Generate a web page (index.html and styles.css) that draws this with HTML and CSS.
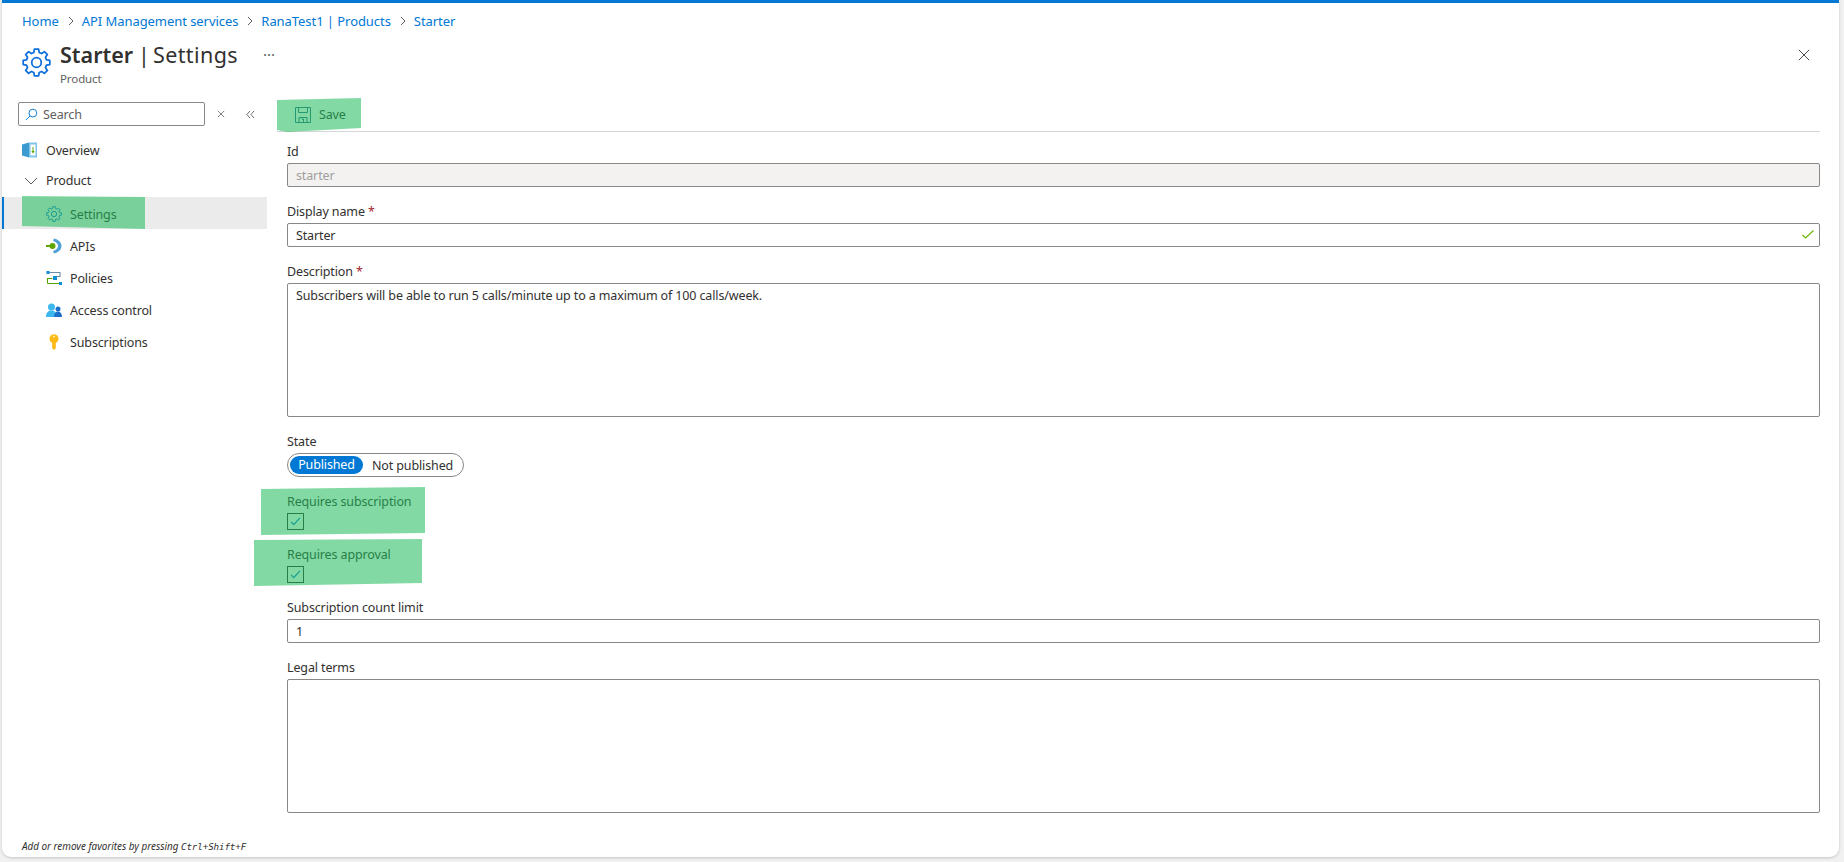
FILE: index.html
```html
<!DOCTYPE html>
<html lang="en">
<head>
<meta charset="utf-8">
<title>Starter | Settings</title>
<link rel="stylesheet" href="styles.css">
</head>
<body>
<svg class="defs" width="0" height="0" aria-hidden="true">
  <symbol id="gear" viewBox="0 0 28 28">
    <path fill="none" stroke="currentColor" stroke-width="1.7" stroke-linejoin="round" d="M23.66 11.41L26.84 11.97V16.03L23.66 16.59L22.66 19L24.52 21.64L21.64 24.52L19 22.66L16.59 23.66L16.03 26.84H11.97L11.41 23.66L9 22.66L6.36 24.52L3.48 21.64L5.34 19L4.34 16.59L1.16 16.03V11.97L4.34 11.41L5.34 9L3.48 6.36L6.36 3.48L9 5.34L11.41 4.34L11.97 1.16H16.03L16.59 4.34L19 5.34L21.64 3.48L24.52 6.36L22.66 9Z"/>
    <circle cx="14" cy="14" r="4.6" fill="none" stroke="currentColor" stroke-width="1.7"/>
  </symbol>
</svg>
<div class="panel">
  <nav class="crumbs">
    <a>Home</a><svg class="sep" viewBox="0 0 8 12"><path d="M2 2l4 4-4 4"/></svg>
    <a>API Management services</a><svg class="sep" viewBox="0 0 8 12"><path d="M2 2l4 4-4 4"/></svg>
    <a>RanaTest1 | Products</a><svg class="sep" viewBox="0 0 8 12"><path d="M2 2l4 4-4 4"/></svg>
    <a>Starter</a>
  </nav>
  <header class="head">
    <svg class="head-gear"><use href="#gear"/></svg>
    <div class="head-text">
      <h1 class="title"><b>Starter</b><span class="bar">|</span><span class="page">Settings</span></h1>
      <div class="subtitle">Product</div>
    </div>
    <span class="more">···</span>
    <svg class="close" viewBox="0 0 14 14"><path d="M1 1l12 12M13 1L1 13"/></svg>
  </header>
  <div class="main">
    <aside class="side">
      <div class="side-top">
        <div class="search">
          <svg class="search-ico" viewBox="0 0 14 14"><circle cx="8.500" cy="5.500" r="4.200"/><path d="M5.500 8.500L1 13"/></svg>
          <span>Search</span>
        </div>
        <svg class="mini mini-x" viewBox="0 0 10 10"><path d="M1 1l8 8M9 1L1 9"/></svg>
        <svg class="mini mini-c" viewBox="0 0 10 10"><path d="M4.500 1L1 5l3.500 4M9 1L5.500 5 9 9"/></svg>
      </div>
      <div class="item first">
        <svg class="ico" viewBox="0 0 16 16"><path fill="#3b9bd1" d="M0 2.500L7 .5v15l-7-2z"/><path fill="#7ec4e8" d="M7 .5h8v15H7z"/><path fill="#fff" d="M8.500 2.500h5v11h-5z"/><path fill="#5ea500" d="M10.500 5h1v4h1.200l-1.700 2.500L9.300 9h1.200z"/></svg>
        <span>Overview</span>
      </div>
      <div class="item group">
        <svg class="chev" viewBox="0 0 14 8"><path d="M1 1l6 6 6-6"/></svg>
        <span>Product</span>
      </div>
      <div class="item sub active">
        <svg class="ico gear-small"><use href="#gear"/></svg>
        <span>Settings</span>
      </div>
      <div class="item sub">
        <svg class="ico" viewBox="0 0 16 16"><path fill="#50a0d8" d="M8 .5c4.500 1 7.500 4 7.500 7.500S12.500 14.500 8 15.500l-1-2.500c3-.8 5-2.700 5-5s-2-4.200-5-5z"/><circle cx="6.500" cy="8" r="3" fill="#5ea500"/><path fill="#5ea500" d="M0 7h5v2H0z"/></svg>
        <span>APIs</span>
      </div>
      <div class="item sub">
        <svg class="ico" viewBox="0 0 16 16"><path fill="none" stroke="#59a300" stroke-width="1.100" d="M1.500 13.500h12M1.500 13.500v-5h5"/><path fill="none" stroke="#6b8fa8" stroke-width="1.100" d="M2 2.500h12v4h-4"/><rect x="7" y="6" width="4" height="4" fill="#0f8fd4"/><rect x="0.500" y="1" width="3" height="3" fill="#0f8fd4"/><rect x="13" y="12" width="3" height="3" fill="#0f8fd4"/></svg>
        <span>Policies</span>
      </div>
      <div class="item sub">
        <svg class="ico" viewBox="0 0 16 16"><circle cx="5.500" cy="5" r="3.500" fill="#3cb8ee"/><path fill="#3cb8ee" d="M0 15c0-4 2-6.500 5.500-6.500S11 11 11 15z"/><circle cx="12" cy="7" r="2.500" fill="#1c6fc9"/><path fill="#1c6fc9" d="M8 15c0-3 1.500-5.500 4-5.500s4 2.500 4 5.500z"/></svg>
        <span>Access control</span>
      </div>
      <div class="item sub">
        <svg class="ico" viewBox="0 0 16 16"><circle cx="8" cy="4.700" r="4.500" fill="#fdb813"/><path fill="#fdb813" d="M6.200 7h3.600v7.300L8 16l-1.800-1.700z"/><rect x="7" y="1.800" width="2" height="1.500" fill="#fff2b8"/></svg>
        <span>Subscriptions</span>
      </div>
      <p class="hint">Add or remove favorites by pressing <code>Ctrl+Shift+F</code></p>
    </aside>
    <section class="content">
      <div class="toolbar">
        <button class="save">
          <svg viewBox="0 0 16 16"><path fill="none" stroke="#2f6e8f" stroke-width="1" d="M.5.500h15v15H.500zM3.500.500v5h9v-5M4 15.500v-5h8v5M6.500 12h2v3.500"/></svg>
          <span>Save</span>
        </button>
      </div>
      <form class="form">
        <div class="field">
          <label>Id</label>
          <div class="input disabled">starter</div>
        </div>
        <div class="field">
          <label>Display name <em>*</em></label>
          <div class="input">Starter
            <svg class="valid" viewBox="0 0 12 9"><path d="M.5 5l3 3L11.500.500"/></svg>
          </div>
        </div>
        <div class="field">
          <label>Description <em>*</em></label>
          <div class="input area">Subscribers will be able to run 5 calls/minute up to a maximum of 100 calls/week.</div>
        </div>
        <div class="field">
          <label>State</label>
          <div class="toggle"><span class="on">Published</span><span class="off">Not published</span></div>
        </div>
        <div class="field">
          <label>Requires subscription</label>
          <div class="check"><svg viewBox="0 0 17 17"><path d="M3.500 9l3 3 7-7.500"/></svg></div>
        </div>
        <div class="field">
          <label>Requires approval</label>
          <div class="check"><svg viewBox="0 0 17 17"><path d="M3.500 9l3 3 7-7.500"/></svg></div>
        </div>
        <div class="field">
          <label>Subscription count limit</label>
          <div class="input">1</div>
        </div>
        <div class="field">
          <label>Legal terms</label>
          <div class="input area"></div>
        </div>
      </form>
    </section>
  </div>
</div>
<div class="mark mark-save"></div>
<div class="mark mark-settings"></div>
<div class="mark mark-sub"></div>
<div class="mark mark-appr"></div>
</body>
</html>
```

FILE: styles.css
```css
* { box-sizing: border-box; }
html, body { margin: 0; height: 862px; overflow: hidden; }
body { background: #f1f1f1; font-family: "Noto Sans", "Open Sans", sans-serif; font-size: 12.5px; letter-spacing: -.13px; color: #323130; position: relative; }
.defs { position: absolute; }
.panel { margin-left: 2px; width: 1837px; height: 857px; background: #fff; border-top: 3px solid #0078d4; border-radius: 0 0 9px 9px; box-shadow: 0 1px 3px rgba(0,0,0,.18); display: flex; flex-direction: column; }
.crumbs { display: flex; align-items: center; height: 18px; margin: 9px 0 0 20px; font-size: 13px; letter-spacing: -.06px; color: #0078d4; }
.sep { width: 8px; height: 12px; margin: 0 7px 0 8px; fill: none; stroke: #605e5c; stroke-width: 1; }
.head { display: flex; align-items: flex-start; height: 68px; margin-top: 0; padding: 13px 0 0 20px; }
.head-gear { width: 29px; height: 29px; margin-top: 5px; color: #0f6fdc; flex: none; }
.head-text { margin-left: 9px; }
.title { margin: 0; font-size: 21.5px; line-height: 24px; font-weight: 400; letter-spacing: 0; color: #323130; }
.title b { font-weight: 600; }
.title .bar { margin: 0 3px 0 5px; }
.title .page { letter-spacing: .4px; }
.subtitle { font-size: 11.5px; line-height: 16px; margin-top: 4px; letter-spacing: -.1px; color: #605e5c; }
.more { margin: 0 0 0 25px; line-height: 22px; font-size: 15px; color: #605e5c; letter-spacing: 0; }
.close { width: 12px; height: 12px; margin: 6px 0 0 auto; margin-right: 29px; fill: none; stroke: #323130; stroke-width: 1; }
.main { flex: 1; display: flex; min-height: 0; }
.side { width: 265px; flex: none; display: flex; flex-direction: column; padding-top: 4px; }
.side-top { display: flex; align-items: center; height: 24px; padding-left: 16px; margin-bottom: 8px; }
.search { width: 187px; height: 24px; border: 1px solid #8a8886; border-radius: 2px; display: flex; align-items: center; padding-left: 6px; color: #605e5c; font-size: 12.5px; }
.search-ico { width: 13px; height: 13px; margin-right: 5px; fill: none; stroke: #0078d4; stroke-width: 1; }
.mini { fill: none; stroke: #605e5c; stroke-width: 1; flex: none; }
.mini-x { width: 8px; height: 8px; margin-left: 12px; }
.mini-c { width: 9px; height: 9px; margin-left: 21px; }
.item { display: flex; align-items: center; height: 32px; padding-left: 20px; }
.item span { margin-left: 8px; }
.item.first { height: 32px; }
.item.group { height: 31px; padding-left: 22px; padding-bottom: 2px; }
.item.group span { margin-left: 8px; }
.chev { width: 14px; height: 8px; fill: none; stroke: #605e5c; stroke-width: 1; }
.item.sub { padding-left: 44px; padding-top: 2px; }
.item.active { background: #ebebeb; border-left: 2px solid #0078d4; padding-left: 42px; }
.ico { width: 16px; height: 16px; flex: none; }
.gear-small { color: #0f6fdc; }
.hint { margin: auto 0 0 20px; padding-bottom: 3px; font-size: 9.9px; line-height: 14px; font-style: italic; letter-spacing: 0; color: #323130; }
.hint code { font-family: "DejaVu Sans Mono", monospace; font-size: 9.2px; letter-spacing: -.1px; }
.content { flex: 1; min-width: 0; padding: 0 19px 0 10px; }
.toolbar { height: 34px; border-bottom: 1px solid #d6d6d6; }
.save { height: 33px; border: 0; background: none; padding: 0 0 0 18px; display: flex; align-items: center; font: inherit; letter-spacing: inherit; color: #323130; }
.save svg { width: 16px; height: 16px; }
.save span { margin-left: 8px; }
.form { padding: 11px 0 0 10px; }
.field { margin-bottom: 16px; }
.field label { display: block; height: 18px; line-height: 18px; margin-bottom: 2px; }
.field em { color: #a4262c; font-style: normal; }
.input { position: relative; height: 24px; border: 1px solid #8a8886; border-radius: 2px; padding-left: 8px; line-height: 23px; background: #fff; }
.input.disabled { background: #f3f2f1; color: #a19f9d; }
.input.area { height: 134px; line-height: 20px; padding-top: 2px; }
.valid { position: absolute; right: 5px; top: 6px; width: 12px; height: 9px; fill: none; stroke: #6bb700; stroke-width: 1.200; }
.toggle { display: flex; align-items: center; width: 177px; height: 24px; border: 1px solid #8a8886; border-radius: 12px; padding-left: 2px; }
.toggle .on { width: 73px; height: 18px; line-height: 17px; border-radius: 9px; background: #0078d4; color: #fff; text-align: center; }
.toggle .off { margin-left: 9px; }
.check { width: 17px; height: 17px; border: 1px solid #323130; background: #fff; }
.check svg { display: block; width: 15px; height: 15px; fill: none; stroke: #0078d4; stroke-width: 1.300; }
.mark { position: absolute; background: rgba(32,187,91,.56); }
.mark-save { left: 277px; top: 98px; width: 84px; height: 34px; clip-path: polygon(0 2px, 100% 0, 100% 30px, 10px 100%, 0 32px); }
.mark-settings { left: 22px; top: 195px; width: 123px; height: 34px; clip-path: polygon(0 1px, 100% 2px, 100% 100%, 0 31px); }
.mark-sub { left: 261px; top: 487px; width: 164px; height: 48px; clip-path: polygon(0 2px, 100% 0, 100% 46px, 0 100%); }
.mark-appr { left: 254px; top: 539px; width: 168px; height: 47px; clip-path: polygon(0 1px, 100% 0, 100% 44px, 0 100%); }
```
